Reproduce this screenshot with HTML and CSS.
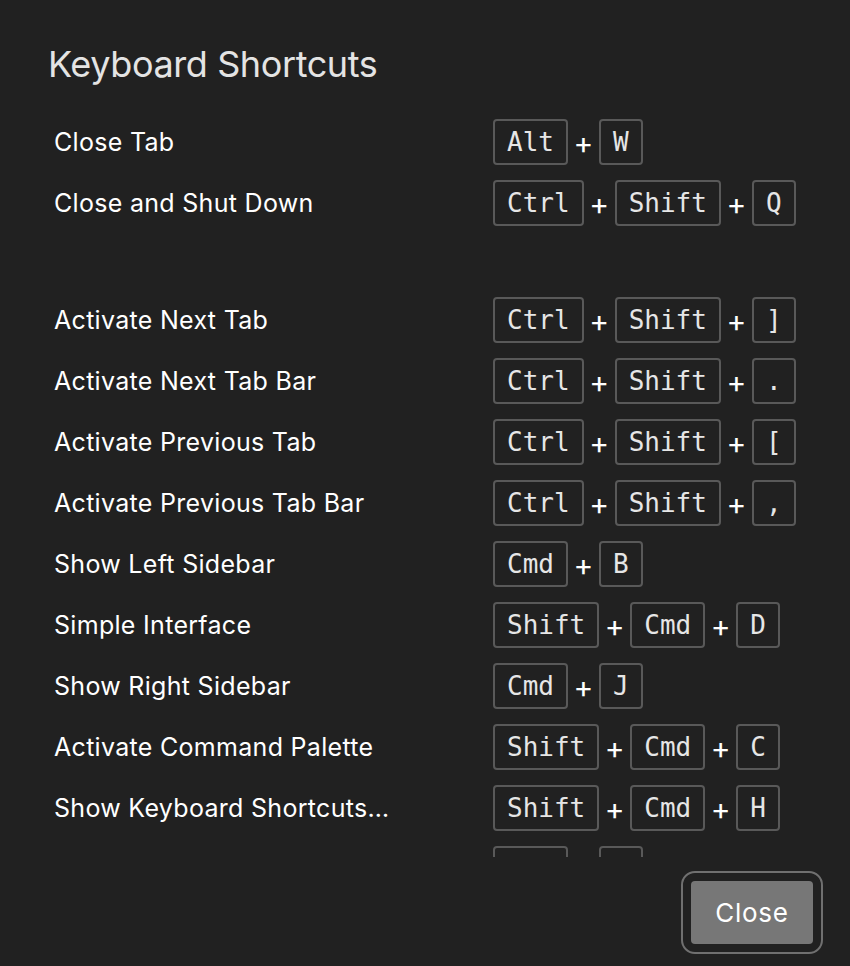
FILE: index.html
```html
<!DOCTYPE html>
<html>
<head>
<meta charset="utf-8">
<link rel="stylesheet" href="styles.css">
</head>
<body>
<div class="dialog">
  <h1 class="title">Keyboard Shortcuts</h1>
  <div class="list">
    <div class="row"><div class="label">Close Tab</div><div class="keys"><span class="key">Alt</span><span class="plus">+</span><span class="key">W</span></div></div>
    <div class="row"><div class="label">Close and Shut Down</div><div class="keys"><span class="key">Ctrl</span><span class="plus">+</span><span class="key">Shift</span><span class="plus">+</span><span class="key">Q</span></div></div>
    <div class="spacer"></div>
    <div class="row"><div class="label">Activate Next Tab</div><div class="keys"><span class="key">Ctrl</span><span class="plus">+</span><span class="key">Shift</span><span class="plus">+</span><span class="key">]</span></div></div>
    <div class="row"><div class="label">Activate Next Tab Bar</div><div class="keys"><span class="key">Ctrl</span><span class="plus">+</span><span class="key">Shift</span><span class="plus">+</span><span class="key">.</span></div></div>
    <div class="row"><div class="label">Activate Previous Tab</div><div class="keys"><span class="key">Ctrl</span><span class="plus">+</span><span class="key">Shift</span><span class="plus">+</span><span class="key">[</span></div></div>
    <div class="row"><div class="label">Activate Previous Tab Bar</div><div class="keys"><span class="key">Ctrl</span><span class="plus">+</span><span class="key">Shift</span><span class="plus">+</span><span class="key">,</span></div></div>
    <div class="row"><div class="label">Show Left Sidebar</div><div class="keys"><span class="key">Cmd</span><span class="plus">+</span><span class="key">B</span></div></div>
    <div class="row"><div class="label">Simple Interface</div><div class="keys"><span class="key">Shift</span><span class="plus">+</span><span class="key">Cmd</span><span class="plus">+</span><span class="key">D</span></div></div>
    <div class="row"><div class="label">Show Right Sidebar</div><div class="keys"><span class="key">Cmd</span><span class="plus">+</span><span class="key">J</span></div></div>
    <div class="row"><div class="label">Activate Command Palette</div><div class="keys"><span class="key">Shift</span><span class="plus">+</span><span class="key">Cmd</span><span class="plus">+</span><span class="key">C</span></div></div>
    <div class="row"><div class="label">Show Keyboard Shortcuts…</div><div class="keys"><span class="key">Shift</span><span class="plus">+</span><span class="key">Cmd</span><span class="plus">+</span><span class="key">H</span></div></div>
    <div class="row row-partial"><div class="label">Show Settings</div><div class="keys"><span class="key">Cmd</span><span class="plus">+</span><span class="key">,</span></div></div>
  </div>
  <div class="footer">
    <button class="close-btn">Close</button>
  </div>
</div>
</body>
</html>
```
FILE: styles.css
```css
html, body {
  margin: 0;
  padding: 0;
  background: #212121;
}
body {
  width: 850px;
  height: 966px;
  overflow: hidden;
  font-family: Inter, "Noto Sans", sans-serif;
  color: #ffffff;
}
.dialog {
  display: flex;
  flex-direction: column;
  height: 966px;
}
.title {
  margin: 0;
  padding: 42px 0 0 48px;
  font-size: 36px;
  font-weight: 400;
  line-height: 44px;
  color: #e4e4e4;
  letter-spacing: -0.4px;
}
.list {
  margin-top: 33px;
  height: 738px;
  overflow: hidden;
  padding-left: 54px;
  display: flex;
  flex-direction: column;
  gap: 15px;
  flex-shrink: 0;
}
.spacer {
  height: 41px;
  flex-shrink: 0;
}
.row {
  display: grid;
  grid-template-columns: 439px auto;
  align-items: center;
  height: 46px;
  flex-shrink: 0;
}
.label {
  font-size: 25px;
  line-height: 30px;
  color: #ffffff;
  white-space: nowrap;
  letter-spacing: 0.3px;
}
.keys {
  display: flex;
  align-items: center;
}
.key {
  box-sizing: border-box;
  height: 46px;
  display: inline-flex;
  align-items: center;
  padding: 0 12px;
  border: 2px solid #595959;
  border-radius: 4px;
  font-family: "DejaVu Sans Mono", monospace;
  font-size: 26px;
  color: #e6e6e6;
}
.plus {
  width: 31px;
  text-align: center;
  font-size: 30px;
  line-height: 30px;
  font-weight: 400;
  color: #ffffff;
  padding-top: 1px;
}
.footer {
  display: flex;
  justify-content: flex-end;
  padding: 24px 37px 0 0;
}
.close-btn {
  width: 122px;
  height: 63px;
  background: #777777;
  color: #ffffff;
  border: none;
  border-radius: 4px;
  font-family: Inter, "Noto Sans", sans-serif;
  font-size: 26px;
  letter-spacing: 0.7px;
  padding: 0;
  outline: 2px solid #707070;
  outline-offset: 8px;
}
```
